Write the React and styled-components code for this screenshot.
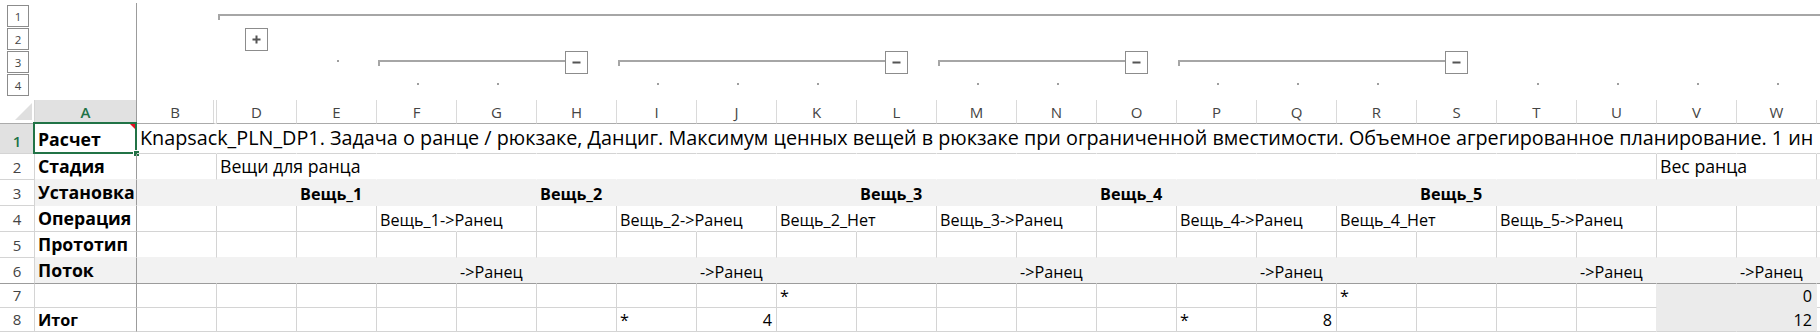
import React from 'react';
import styled, { createGlobalStyle } from 'styled-components';

const FONT = `"Open Sans", "Noto Sans", "DejaVu Sans", sans-serif`;
const GRID = '#d4d4d4';
const HEAD_SEP = '#dadada';
const FREEZE = '#9c9c9c';
const BAND = '#f2f2f2';
const TOTAL = '#ebebeb';
const GREEN = '#217346';
const SEL_HEAD = '#e1e1e1';
const OUTLINE = '#a6a6a6';

const SIZE = { xl: 19.8, lg: 17.7, md: 16.2, sm: 14.8 };

const LETTERS = ['B', 'D', 'E', 'F', 'G', 'H', 'I', 'J', 'K', 'L', 'M', 'N', 'O', 'P', 'Q', 'R', 'S', 'T', 'U', 'V', 'W'];
const COLS = [...LETTERS, 'X'];
const colNo = (l) => LETTERS.indexOf(l) + 1;

const GlobalStyle = createGlobalStyle`
  html, body { margin: 0; padding: 0; background: #fff; }
  body { overflow: hidden; font-family: ${FONT}; }
`;

const Sheet = styled.div`
  width: 1820px;
  height: 332px;
  overflow: hidden;
  background: #fff;
`;

/* ---------- outline (grouping) area ---------- */
const OutlineArea = styled.div`
  display: flex;
  height: 100px;
`;

const LevelPanel = styled.div`
  flex: none;
  box-sizing: border-box;
  width: 137px;
  margin-top: 3px;
  padding: 2px 0 0 7px;
  border-right: 1px solid ${FREEZE};
  display: flex;
  flex-direction: column;
  gap: 1px;
`;

const LevelButton = styled.div`
  box-sizing: border-box;
  width: 22px;
  height: 22px;
  border: 1px solid #8c8c8c;
  display: flex;
  align-items: center;
  justify-content: center;
  font-family: ${FONT};
  font-size: 11.5px;
  color: #444;
`;

const OutlineGrid = styled.div`
  flex: 1;
  display: grid;
  grid-template-columns: repeat(21, 80px) 1fr;
  grid-template-rows: repeat(4, 23px);
  padding-top: 5px;
`;

const Group = styled.div`
  grid-row: ${(p) => p.$lane};
  grid-column: ${(p) => p.$from} / ${(p) => p.$to};
  display: flex;
  align-items: flex-start;
  padding-right: ${(p) => (p.$open ? 0 : 29)}px;
`;

const Bar = styled.div`
  flex: 1;
  box-sizing: border-box;
  height: 6px;
  margin: 9px 0 0 1px;
  border-top: 2px solid ${OUTLINE};
  border-left: 2px solid ${OUTLINE};
`;

const OutlineButton = styled.div`
  box-sizing: border-box;
  flex: none;
  width: 23px;
  height: 23px;
  border: 1px solid #8c8c8c;
  background: #fff;
  display: flex;
  align-items: center;
  justify-content: center;
`;

const Collapsed = styled(OutlineButton)`
  grid-row: ${(p) => p.$lane};
  grid-column: ${(p) => p.$col};
  margin-left: 28px;
`;

const Dot = styled.div`
  grid-row: ${(p) => p.$lane};
  grid-column: ${(p) => p.$col};
  width: 2px;
  height: 2px;
  margin: 9px 0 0 40px;
  background: #9e9e9e;
`;

const SignIcon = ({ plus }) => (
  <svg width="9" height="9" viewBox="0 0 9 9">
    <rect x="0.5" y="3.5" width="8" height="2" fill="#555" />
    {plus && <rect x="3.5" y="0.5" width="2" height="8" fill="#555" />}
  </svg>
);

/* ---------- sheet grid ---------- */
const Grid = styled.div`
  display: grid;
  grid-template-columns: 35px 102px repeat(21, 80px) 1fr;
  grid-template-rows: 24px 30px 26px 26px 26px 26px 26px 24px 24px;
`;

const Corner = styled.div`
  box-sizing: border-box;
  border-right: 1px solid ${GRID};
  border-bottom: 1px solid #ababab;
  display: flex;
  align-items: flex-end;
  justify-content: flex-end;
  padding: 0 2px 3px 0;
`;

const CornerTri = styled.div`
  width: 0;
  height: 0;
  border-left: 17px solid transparent;
  border-bottom: 17px solid #dfdfdf;
`;

const ColHeader = styled.div`
  box-sizing: border-box;
  display: flex;
  align-items: flex-end;
  justify-content: center;
  padding-bottom: 3px;
  background: ${(p) => (p.$selected ? SEL_HEAD : '#fff')};
  color: ${(p) => (p.$selected ? GREEN : '#444')};
  font-weight: ${(p) => (p.$selected ? 600 : 400)};
  border-right: ${(p) => (p.$double ? `4px double ${HEAD_SEP}` : `1px solid ${p.$right || HEAD_SEP}`)};
  border-bottom: 1px solid #ababab;
  font-family: ${FONT};
  font-size: 15px;
  line-height: 1;
`;

const RowHeader = styled.div`
  box-sizing: border-box;
  display: flex;
  align-items: flex-end;
  justify-content: center;
  padding-bottom: 4px;
  background: ${(p) => (p.$selected ? SEL_HEAD : '#fff')};
  color: ${(p) => (p.$selected ? GREEN : '#444')};
  font-weight: ${(p) => (p.$selected ? 600 : 400)};
  border-right: 1px solid ${GRID};
  border-bottom: 1px solid ${(p) => p.$bottom};
  font-family: ${FONT};
  font-size: 15px;
  line-height: 1;
`;

const Cell = styled.div`
  box-sizing: border-box;
  position: relative;
  min-width: 0;
  display: flex;
  align-items: flex-end;
  justify-content: ${(p) => (p.$align === 'right' ? 'flex-end' : 'flex-start')};
  padding: 0 ${(p) => (p.$align === 'right' ? 4 : 0)}px ${(p) => p.$pb}px ${(p) => (p.$align === 'right' ? 0 : 3)}px;
  background: ${(p) => p.$fill || 'transparent'};
  border-right: 1px solid ${(p) => p.$right};
  border-bottom: 1px solid ${(p) => p.$bottom};
  white-space: nowrap;
  font-family: ${FONT};
  font-size: ${(p) => SIZE[p.$size]}px;
  font-weight: ${(p) => (p.$bold ? 700 : 400)};
  line-height: 1;
  color: #000;
`;

const Selection = styled.div`
  position: absolute;
  top: -2px;
  left: -2px;
  right: -1px;
  bottom: -1px;
  border: 2px solid ${GREEN};
  pointer-events: none;
`;

const FillHandle = styled.div`
  position: absolute;
  right: -5px;
  bottom: -5px;
  width: 5px;
  height: 5px;
  background: ${GREEN};
  border: 1px solid #fff;
`;

const CommentMark = styled.div`
  position: absolute;
  top: 0;
  right: 1px;
  width: 0;
  height: 0;
  border-top: 5px solid #e81123;
  border-left: 5px solid transparent;
`;

const LONG =
  'Knapsack_PLN_DP1. Задача о ранце / рюкзаке, Данциг. Максимум ценных вещей в рюкзаке при ограниченной вместимости. Объемное агрегированное планирование. 1 ин';

const ROWS = [
  {
    n: 1, label: 'Расчет', labelSize: 'lg', labelPb: 4, selected: true, hideAll: true,
    cells: { B: { t: LONG, size: 'xl', pb: 5 } },
  },
  {
    n: 2, label: 'Стадия', labelSize: 'lg', bottom: BAND,
    hide: ['D', 'E', 'F', 'G', 'H', 'I', 'J', 'K', 'L', 'M', 'N', 'O', 'P', 'Q', 'R', 'S', 'T', 'V'],
    cells: { D: { t: 'Вещи для ранца', size: 'lg' }, V: { t: 'Вес ранца', size: 'lg' } },
  },
  {
    n: 3, label: 'Установка', labelSize: 'lg', fill: BAND,
    cells: {
      E: { t: 'Вещь_1', bold: true }, H: { t: 'Вещь_2', bold: true }, L: { t: 'Вещь_3', bold: true },
      O: { t: 'Вещь_4', bold: true }, S: { t: 'Вещь_5', bold: true },
    },
  },
  {
    n: 4, label: 'Операция', labelSize: 'lg', hide: ['F', 'I', 'K', 'M', 'P', 'R', 'T'],
    cells: {
      F: { t: 'Вещь_1->Ранец' }, I: { t: 'Вещь_2->Ранец' }, K: { t: 'Вещь_2_Нет' },
      M: { t: 'Вещь_3->Ранец' }, P: { t: 'Вещь_4->Ранец' }, R: { t: 'Вещь_4_Нет' },
      T: { t: 'Вещь_5->Ранец' },
    },
  },
  { n: 5, label: 'Прототип', labelSize: 'lg', bottom: BAND, cells: {} },
  {
    n: 6, label: 'Поток', labelSize: 'lg', fill: BAND, freeze: true,
    cells: {
      G: { t: '->Ранец' }, J: { t: '->Ранец' }, N: { t: '->Ранец' },
      Q: { t: '->Ранец' }, U: { t: '->Ранец' }, W: { t: '->Ранец' },
    },
  },
  {
    n: 7, total: true, totalBottom: true,
    cells: { K: { t: '*' }, R: { t: '*' }, W: { t: '0', align: 'right' } },
  },
  {
    n: 8, label: 'Итог', labelSize: 'md', total: true,
    cells: {
      I: { t: '*' }, J: { t: '4', align: 'right' }, P: { t: '*' },
      Q: { t: '8', align: 'right' }, W: { t: '12', align: 'right' },
    },
  },
];

function rightColor(row, c) {
  if (row.fill || row.hideAll) return 'transparent';
  if (row.hide && row.hide.includes(c)) return 'transparent';
  if (row.total && (c === 'V' || c === 'W')) return 'transparent';
  if (row.total && c === 'U') return TOTAL;
  return GRID;
}

function bottomColor(row, c) {
  if (row.freeze) return FREEZE;
  if (row.bottom) return row.bottom;
  if (row.fill) return 'transparent';
  if (row.totalBottom && (c === 'V' || c === 'W')) return 'transparent';
  return GRID;
}

function SheetRow({ row }) {
  return (
    <>
      <RowHeader $selected={row.selected} $bottom={row.freeze ? FREEZE : GRID}>
        {row.n}
      </RowHeader>
      <Cell
        $right={FREEZE}
        $bottom={bottomColor(row, 'A')}
        $fill={row.fill}
        $bold
        $size={row.labelSize || 'md'}
        $pb={row.labelPb ?? 3}
      >
        {row.label}
        {row.selected && (
          <>
            <Selection>
              <FillHandle />
            </Selection>
            <CommentMark />
          </>
        )}
      </Cell>
      {COLS.map((c) => {
        const d = row.cells[c] || {};
        const fill = row.fill || (row.total && (c === 'V' || c === 'W') ? TOTAL : undefined);
        return (
          <Cell
            key={c}
            $right={rightColor(row, c)}
            $bottom={bottomColor(row, c)}
            $fill={fill}
            $bold={d.bold}
            $size={d.size || 'md'}
            $align={d.align}
            $pb={d.pb ?? 3}
          >
            {d.t}
          </Cell>
        );
      })}
    </>
  );
}

const LANE3_GROUPS = [
  ['F', 'H'],
  ['I', 'L'],
  ['M', 'O'],
  ['P', 'S'],
];
const LANE4_DOTS = ['F', 'G', 'I', 'J', 'K', 'M', 'N', 'P', 'Q', 'R', 'T', 'U', 'V', 'W'];

export default function App() {
  return (
    <>
      <GlobalStyle />
      <Sheet>
        <OutlineArea>
          <LevelPanel>
            {[1, 2, 3, 4].map((l) => (
              <LevelButton key={l}>{l}</LevelButton>
            ))}
          </LevelPanel>
          <OutlineGrid>
            <Group $lane={1} $from={colNo('D')} $to={-1} $open>
              <Bar />
            </Group>
            <Collapsed $lane={2} $col={colNo('D')}>
              <SignIcon plus />
            </Collapsed>
            <Dot $lane={3} $col={colNo('E')} />
            {LANE3_GROUPS.map(([a, b]) => (
              <Group key={a} $lane={3} $from={colNo(a)} $to={colNo(b) + 1}>
                <Bar />
                <OutlineButton>
                  <SignIcon />
                </OutlineButton>
              </Group>
            ))}
            {LANE4_DOTS.map((c) => (
              <Dot key={c} $lane={4} $col={colNo(c)} />
            ))}
          </OutlineGrid>
        </OutlineArea>
        <Grid>
          <Corner>
            <CornerTri />
          </Corner>
          <ColHeader $selected $right={FREEZE}>A</ColHeader>
          {COLS.map((c) => (
            <ColHeader key={c} $double={c === 'B'}>
              {c === 'X' ? '' : c}
            </ColHeader>
          ))}
          {ROWS.map((r) => (
            <SheetRow key={r.n} row={r} />
          ))}
        </Grid>
      </Sheet>
    </>
  );
}
